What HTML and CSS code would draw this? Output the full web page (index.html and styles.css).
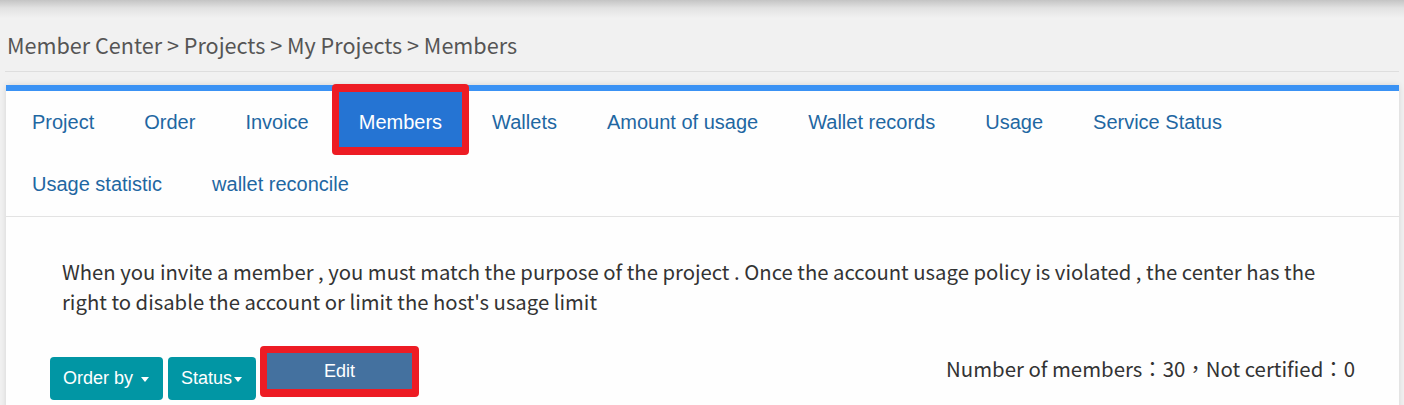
FILE: index.html
```html
<!DOCTYPE html>
<html lang="en">
<head>
<meta charset="utf-8">
<title>Members</title>
<link rel="stylesheet" href="styles.css">
</head>
<body>
<div class="topbar"></div>
<div class="breadcrumb">Member Center &gt; Projects &gt; My Projects &gt; Members</div>
<div class="card">
  <nav class="tabs">
    <a class="tab">Project</a>
    <a class="tab">Order</a>
    <a class="tab">Invoice</a>
    <a class="tab active marked">Members</a>
    <a class="tab">Wallets</a>
    <a class="tab">Amount of usage</a>
    <a class="tab">Wallet records</a>
    <a class="tab">Usage</a>
    <a class="tab">Service Status</a>
    <a class="tab">Usage statistic</a>
    <a class="tab">wallet reconcile</a>
  </nav>
  <div class="content">
    <p class="notice">When you invite a member , you must match the purpose of the project . Once the account usage policy is violated , the center has the right to disable the account or limit the host's usage limit</p>
    <div class="toolbar">
      <div class="actions">
        <button class="btn btn-teal">Order by <span class="caret spaced"></span></button>
        <button class="btn btn-teal">Status<span class="caret"></span></button>
        <button class="btn btn-edit marked">Edit</button>
      </div>
      <div class="count">Number of members：30，Not certified：0</div>
    </div>
  </div>
</div>
</body>
</html>
```
FILE: styles.css
```css
html, body {
  margin: 0;
  padding: 0;
}
body {
  background: #f1f1f1;
  width: 1404px;
  height: 405px;
  overflow: hidden;
  font-family: "Noto Sans CJK TC", "Noto Sans", sans-serif;
  color: #333;
}
.topbar {
  height: 18px;
  background: linear-gradient(to bottom, #c4c4c4 0%, #e2e2e2 45%, #f1f1f1 100%);
}
.breadcrumb {
  margin: 13px 5px 0 5px;
  padding: 0 0 12px 2px;
  border-bottom: 1px solid #dedede;
  font-size: 21.6px;
  line-height: 28px;
  color: #555;
}
.card {
  margin: 13px 5px 0 6px;
  background: #fefefe;
  border-top: 6px solid #3a92f4;
  box-shadow: 0 0 6px rgba(0, 0, 0, 0.12);
}
.tabs {
  display: flex;
  flex-wrap: wrap;
  column-gap: 10px;
  row-gap: 7px;
  padding: 1px 6px 7px 6px;
  border-bottom: 1px solid #e3e3e3;
}
.tab {
  box-sizing: border-box;
  display: flex;
  align-items: center;
  height: 55px;
  padding: 5px 20px 0 20px;
  font-family: "Liberation Sans", Arial, sans-serif;
  font-size: 20px;
  color: #1f67a2;
  text-decoration: none;
}
.tab.active {
  background: #2574d3;
  color: #fff;
}
.marked {
  position: relative;
}
.marked::after {
  content: "";
  position: absolute;
  top: -8px;
  left: -7px;
  right: -7px;
  bottom: -8px;
  border: 7px solid #ed1c24;
  border-top-width: 8px;
  border-bottom-width: 8px;
  border-radius: 4px;
  pointer-events: none;
}
.content {
  padding: 39px 56px 30px 56px;
}
.notice {
  margin: 0;
  font-size: 20.3px;
  line-height: 30px;
  color: #333;
}
.toolbar {
  display: flex;
  justify-content: space-between;
  align-items: flex-start;
  margin: 41px -12px 0 -12px;
}
.actions {
  display: flex;
  align-items: flex-start;
  gap: 5px;
}
.btn {
  border: none;
  font-family: "Liberation Sans", Arial, sans-serif;
  font-size: 18px;
  color: #fff;
  cursor: pointer;
}
.btn-teal {
  height: 43px;
  padding: 0 14px 0 13px;
  background: #0196a4;
  border-radius: 4px;
}
.btn-edit {
  width: 145px;
  height: 36px;
  margin: -4px 0 0 6px;
  background: #44719f;
  border-radius: 0;
}
.btn-edit.marked::after {
  top: -7px;
  bottom: -8px;
  border-top-width: 7px;
}
.caret {
  display: inline-block;
  width: 0;
  height: 0;
  border-top: 5px solid #fff;
  border-left: 4px solid transparent;
  border-right: 4px solid transparent;
  vertical-align: middle;
  margin-left: 2px;
}
.caret.spaced {
  margin-left: 3px;
}
.count {
  margin-top: -3px;
  font-size: 20.4px;
  line-height: 28px;
  color: #333;
}
```
